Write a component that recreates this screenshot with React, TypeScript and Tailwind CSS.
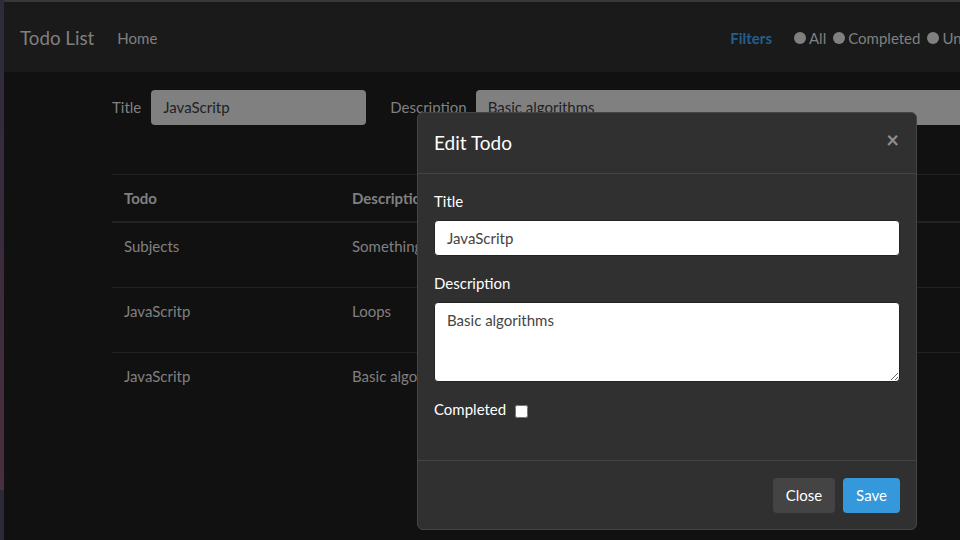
import React from "react";

const rows = [
  { t: "Subjects", d: "Something" },
  { t: "JavaScritp", d: "Loops" },
  { t: "JavaScritp", d: "Basic algorithms" },
];

function Radio({ label }: { label: string }) {
  return (
    <span className="flex items-center shrink-0">
      <span className="w-[12px] h-[12px] rounded-full bg-[#808080] mr-[3px]" />
      <span>{label}</span>
    </span>
  );
}

export default function App() {
  return (
    <div
      className="w-[960px] h-[540px] overflow-hidden relative flex bg-[#111111] text-[15px] text-[#808080]"
      style={{ fontFamily: "Lato, 'Noto Sans', sans-serif" }}
    >
      <div className="w-[4px] shrink-0 h-full flex flex-col">
        <div className="flex-1 bg-gradient-to-b from-[#2d2b3a] via-[#3a2c3c] to-[#4a2f3c]" />
        <div className="h-[50px] bg-[#2b2a36]" />
      </div>
      <div className="flex-1 flex flex-col min-w-0">
        <div className="h-[2px] bg-[#383838]" />
        <nav className="h-[70px] shrink-0 bg-[#1a1a1a] flex items-center pl-[16px] pt-[2px] whitespace-nowrap">
          <span className="text-[18.75px] leading-none">Todo List</span>
          <span className="ml-[23px]">Home</span>
          <span className="ml-auto text-[#245f8a] font-bold">Filters</span>
          <div className="ml-[22px] flex items-center gap-[7px] w-[166px] overflow-hidden">
            <Radio label="All" />
            <Radio label="Completed" />
            <Radio label="Uncompleted" />
          </div>
        </nav>
        <div className="pl-[108px] pt-[18px] whitespace-nowrap">
          <div className="flex items-center">
            <span className="shrink-0">Title</span>
            <div className="ml-[10px] shrink-0 w-[215px] h-[35px] rounded-[4px] bg-[#808080] text-[#222] flex items-center px-[12px]">
              JavaScritp
            </div>
            <span className="ml-[24px] shrink-0">Description</span>
            <div className="ml-[9px] shrink-0 w-[600px] h-[35px] rounded-[4px] bg-[#808080] text-[#222] flex items-center px-[12px]">
              Basic algorithms
            </div>
          </div>
          <div className="mt-[49px] w-[900px] border-t border-[#222]">
            <div className="flex h-[48px] pt-[1px] border-b-2 border-[#222] font-bold items-center">
              <div className="w-[228px] px-[12px]">Todo</div>
              <div className="px-[12px]">Description</div>
            </div>
            {rows.map((r, i) => (
              <div
                key={i}
                className={`flex h-[65px] pt-[12px] leading-[22px] ${i < rows.length - 1 ? "border-b border-[#222]" : ""}`}
              >
                <div className="w-[228px] px-[12px]">{r.t}</div>
                <div className="px-[12px]">{r.d}</div>
              </div>
            ))}
          </div>
        </div>
      </div>

      <div className="absolute left-[417px] top-[112px] w-[500px] h-[418px] bg-[#303030] border border-[#454545] rounded-[6px] text-white flex flex-col">
        <div className="h-[61px] flex items-center justify-between px-[16px] border-b border-[#444]">
          <span className="text-[19px]">Edit Todo</span>
          <span className="text-[22px] font-bold text-[#8f8f8f] leading-none mr-[1px] -mt-[6px]">×</span>
        </div>
        <div className="flex-1 px-[16px] pt-[16px]">
          <div className="leading-[22px]">Title</div>
          <div className="mt-[8px] h-[36px] bg-white rounded-[4px] border border-[#222] flex items-center px-[12px] text-[#444]">
            JavaScritp
          </div>
          <div className="mt-[16px] leading-[22px]">Description</div>
          <textarea
            readOnly
            defaultValue="Basic algorithms"
            className="mt-[8px] block w-full h-[80px] bg-white rounded-[4px] border border-[#222] px-[12px] py-[6px] text-[#444] leading-[22px] outline-none"
            style={{ fontFamily: "Lato, 'Noto Sans', sans-serif", fontSize: "15px" }}
          />
          <div className="mt-[16px] flex items-center leading-[22px]">
            <span>Completed</span>
            <input type="checkbox" className="ml-[9px] mt-[4px] w-[13px] h-[13px]" />
          </div>
        </div>
        <div className="h-[69px] border-t border-[#444] flex items-center justify-end gap-[8px] px-[16px]">
          <button className="h-[35px] w-[62px] rounded-[4px] bg-[#444] text-white">Close</button>
          <button className="h-[35px] w-[57px] rounded-[4px] bg-[#3498db] text-white">Save</button>
        </div>
      </div>
    </div>
  );
}
